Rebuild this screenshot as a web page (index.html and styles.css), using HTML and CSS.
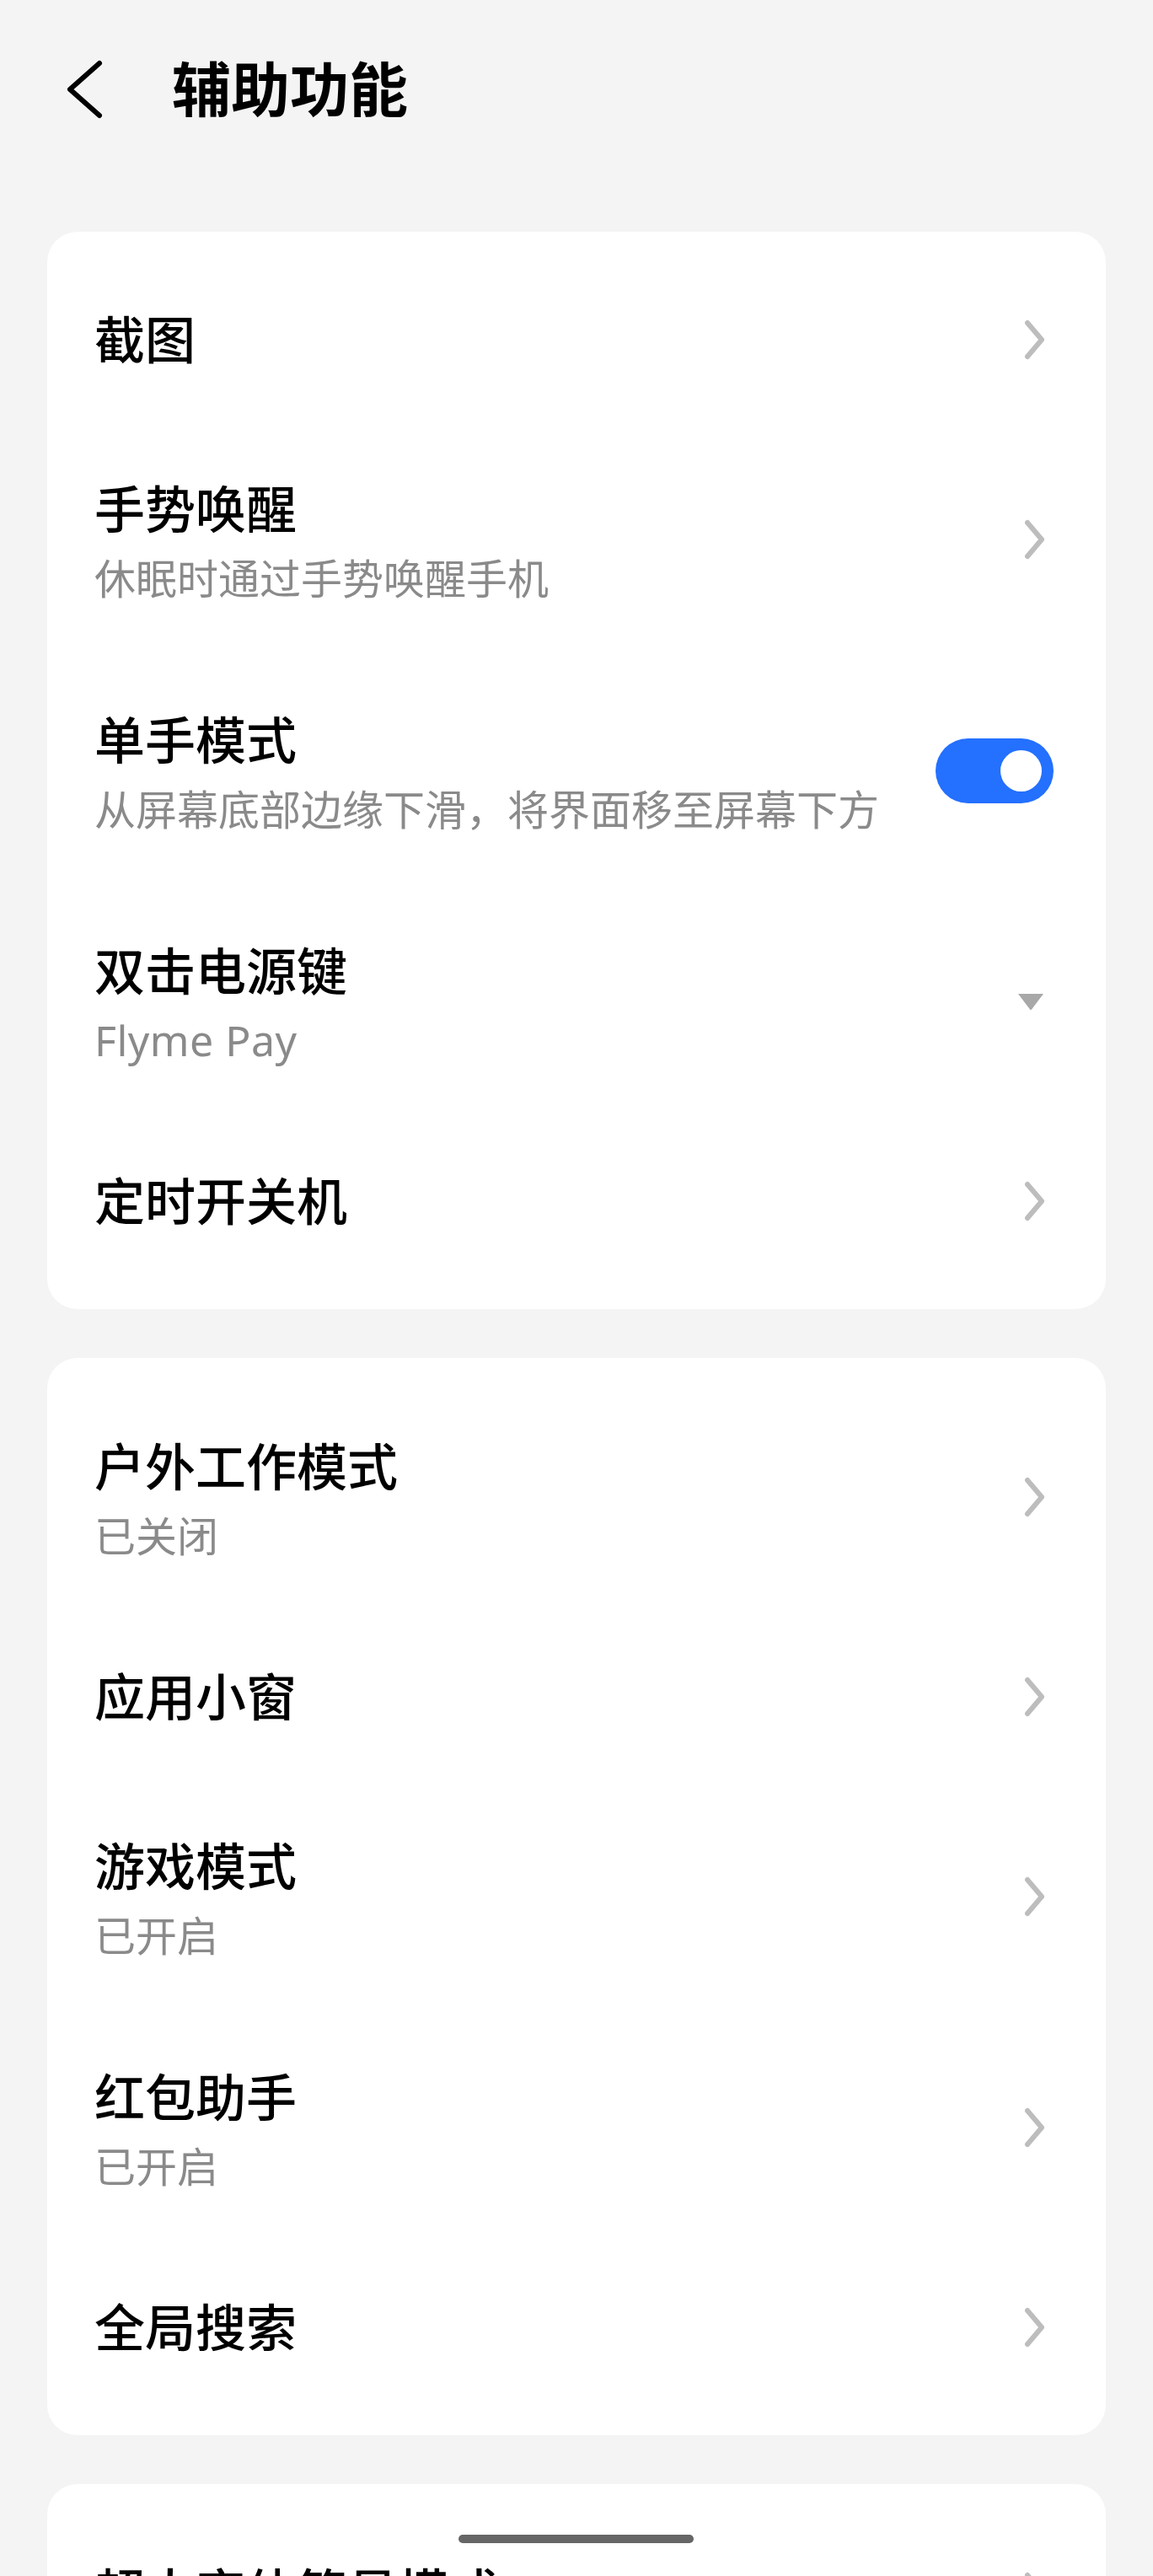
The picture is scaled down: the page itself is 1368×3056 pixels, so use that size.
FILE: index.html
```html
<!DOCTYPE html>
<html lang="zh-CN">
<head>
  <meta charset="UTF-8">
  <meta name="viewport" content="width=device-width, initial-scale=1.0">
  <title>辅助功能</title>
  <link rel="stylesheet" href="styles.css">
</head>
<body>
  <header class="topbar">
    <svg class="back" width="48" height="72" viewBox="0 0 48 72">
      <path d="M40 5 L5 36 L40 67" fill="none" stroke="#000" stroke-width="6" stroke-linecap="round" stroke-linejoin="round"/>
    </svg>
    <h1>辅助功能</h1>
  </header>

  <main class="groups">
    <section class="card">
      <div class="row">
        <div class="text"><div class="title">截图</div></div>
        <svg class="arrow" width="26" height="48" viewBox="0 0 26 48"><path d="M4 4 L21 24 L4 44"/></svg>
      </div>
      <div class="row row-2">
        <div class="text">
          <div class="title">手势唤醒</div>
          <div class="sub">休眠时通过手势唤醒手机</div>
        </div>
        <svg class="arrow" width="26" height="48" viewBox="0 0 26 48"><path d="M4 4 L21 24 L4 44"/></svg>
      </div>
      <div class="row row-2">
        <div class="text">
          <div class="title">单手模式</div>
          <div class="sub">从屏幕底部边缘下滑，将界面移至屏幕下方</div>
        </div>
        <div class="switch on"><span class="knob"></span></div>
      </div>
      <div class="row row-2">
        <div class="text">
          <div class="title">双击电源键</div>
          <div class="sub latin">Flyme Pay</div>
        </div>
        <svg class="drop" width="30" height="19" viewBox="0 0 30 19"><path d="M0 0 H30 L16 18.5 Q15 19.5 14 18.5 Z"/></svg>
      </div>
      <div class="row">
        <div class="text"><div class="title">定时开关机</div></div>
        <svg class="arrow" width="26" height="48" viewBox="0 0 26 48"><path d="M4 4 L21 24 L4 44"/></svg>
      </div>
    </section>

    <section class="card">
      <div class="row row-2">
        <div class="text">
          <div class="title">户外工作模式</div>
          <div class="sub">已关闭</div>
        </div>
        <svg class="arrow" width="26" height="48" viewBox="0 0 26 48"><path d="M4 4 L21 24 L4 44"/></svg>
      </div>
      <div class="row">
        <div class="text"><div class="title">应用小窗</div></div>
        <svg class="arrow" width="26" height="48" viewBox="0 0 26 48"><path d="M4 4 L21 24 L4 44"/></svg>
      </div>
      <div class="row row-2">
        <div class="text">
          <div class="title">游戏模式</div>
          <div class="sub">已开启</div>
        </div>
        <svg class="arrow" width="26" height="48" viewBox="0 0 26 48"><path d="M4 4 L21 24 L4 44"/></svg>
      </div>
      <div class="row row-2">
        <div class="text">
          <div class="title">红包助手</div>
          <div class="sub">已开启</div>
        </div>
        <svg class="arrow" width="26" height="48" viewBox="0 0 26 48"><path d="M4 4 L21 24 L4 44"/></svg>
      </div>
      <div class="row">
        <div class="text"><div class="title">全局搜索</div></div>
        <svg class="arrow" width="26" height="48" viewBox="0 0 26 48"><path d="M4 4 L21 24 L4 44"/></svg>
      </div>
    </section>

    <section class="card">
      <div class="row">
        <div class="text"><div class="title">超大字体简易模式</div></div>
        <svg class="arrow" width="26" height="48" viewBox="0 0 26 48"><path d="M4 4 L21 24 L4 44"/></svg>
      </div>
    </section>
  </main>

  <div class="home-bar"></div>
</body>
</html>
```

FILE: styles.css
```css
html, body {
  overflow: hidden;
}
body {
  margin: 0;
  background: #f4f4f4;
  font-family: "Noto Sans", "Noto Sans CJK SC", sans-serif;
  color: #000;
}
.topbar {
  height: 212px;
  display: flex;
  align-items: center;
  padding-left: 78px;
}
.back {
  display: block;
}
.topbar h1 {
  margin: 0 0 0 78px;
  font-size: 70px;
  font-weight: 700;
  line-height: 1;
}
.groups {
  padding: 63px 56px 0;
  display: flex;
  flex-direction: column;
  gap: 58px;
}
.card {
  background: #fff;
  border-radius: 36px;
  padding: 28px 0;
}
.row {
  height: 200px;
  display: flex;
  align-items: center;
  padding: 0 62px 0 56px;
}
.row-2 {
  height: 274px;
}
.text {
  flex: 1;
  min-width: 0;
}
.title {
  font-size: 60px;
  font-weight: 500;
  line-height: 84px;
  white-space: nowrap;
}
.sub {
  margin-top: 8px;
  font-size: 49px;
  line-height: 64px;
  color: #8a8a8a;
  white-space: nowrap;
}
.sub.latin {
  font-size: 50px;
  letter-spacing: 0.5px;
}
.arrow {
  display: block;
  margin-right: 9px;
}
.arrow path {
  fill: none;
  stroke: #bdbdbd;
  stroke-width: 6;
  stroke-linecap: round;
  stroke-linejoin: round;
}
.drop {
  display: block;
  margin-right: 12px;
  fill: #a8a8a8;
}
.switch {
  width: 140px;
  height: 77px;
  border-radius: 39px;
  background: #d0d0d0;
  box-sizing: border-box;
  padding: 0 14px;
  display: flex;
  align-items: center;
}
.switch.on {
  background: #2470ff;
  justify-content: flex-end;
}
.knob {
  width: 49px;
  height: 49px;
  border-radius: 50%;
  background: #fff;
}
.home-bar {
  position: fixed;
  left: 50%;
  bottom: 39px;
  width: 279px;
  height: 10px;
  margin-left: -140px;
  border-radius: 5px;
  background: #666;
}
```
